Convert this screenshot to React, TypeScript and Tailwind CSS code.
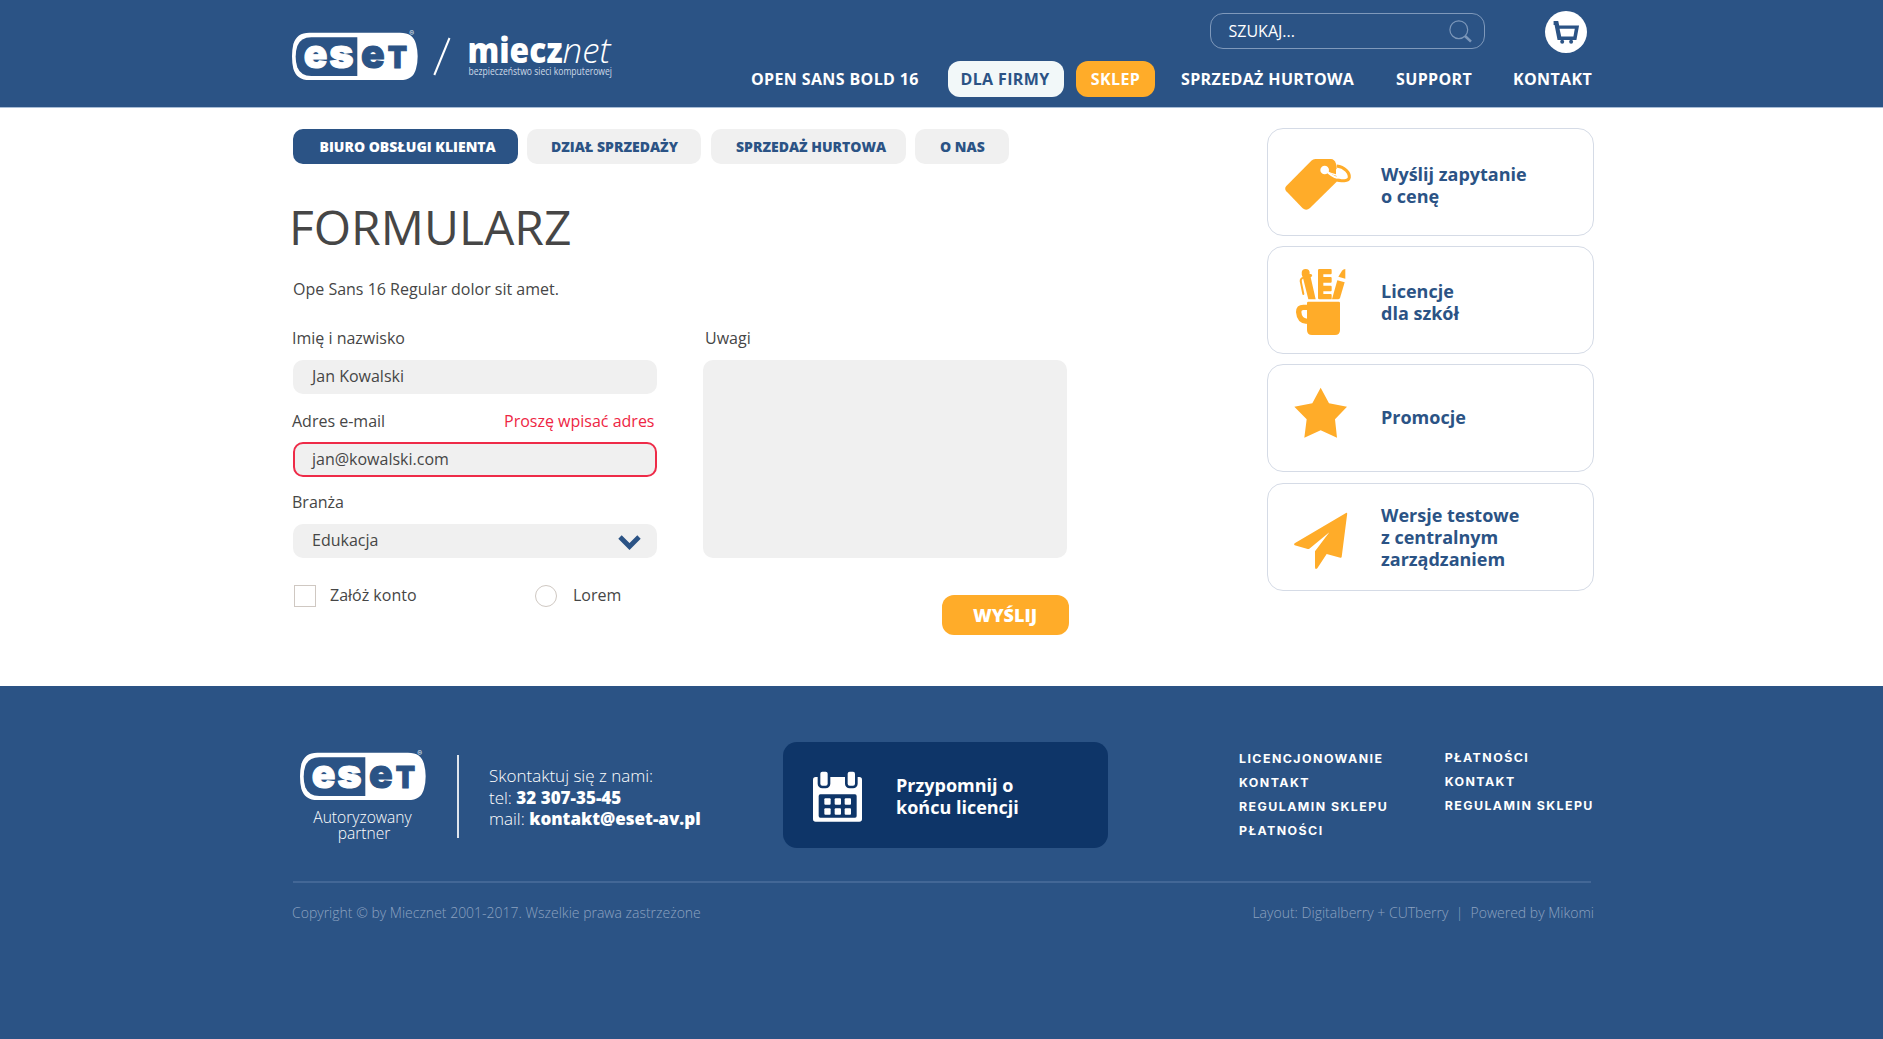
import React from "react";

function EsetLogo() {
  return (
    <svg className="block h-[51px] w-[128px] shrink-0" viewBox="36 27 384 153">
      <path
        d="M88 38H360Q400 38 408 72Q413 90 413 109Q413 130 408 146Q400 180 360 180H88Q50 180 40 146Q36 130 36 109Q36 90 40 72Q50 38 88 38Z"
        fill="#fff"
      />
      <path
        d="M232 52H94Q62 52 52 78Q47 92 47 110Q47 128 52 142Q62 168 94 168H232Z"
        fill="#2b5385"
      />
      <g fontFamily="Inter" fontWeight="900" strokeWidth="3">
        <g fill="#fff" stroke="#fff">
          <text x="71" y="143" fontSize="120" textLength="71" lengthAdjust="spacingAndGlyphs">e</text>
          <text x="148" y="143" fontSize="120" textLength="73" lengthAdjust="spacingAndGlyphs">s</text>
        </g>
        <g fill="#2b5385" stroke="#2b5385">
          <text x="243" y="143" fontSize="120" textLength="71" lengthAdjust="spacingAndGlyphs">e</text>
          <text x="323" y="143" fontSize="91" textLength="58" lengthAdjust="spacingAndGlyphs">T</text>
        </g>
      </g>
      <text x="388" y="48" fontSize="22" fontFamily="Inter" fontWeight="700" fill="#dbe4ee">®</text>
    </svg>
  );
}

function MiecznetLogo() {
  return (
    <svg className="block h-[51px] w-[190px] shrink-0" viewBox="430 29 190 51">
      <path d="M434.3 75L449.5 38" stroke="#fff" strokeWidth="2" />
      <g fontFamily="Open Sans" fill="#fff">
        <text x="467.5" y="63.2" fontSize="35" fontWeight="800" textLength="95" lengthAdjust="spacingAndGlyphs">miecz</text>
        <text x="562.5" y="63.2" fontSize="35" fontWeight="300" fontStyle="italic" textLength="48" lengthAdjust="spacingAndGlyphs">net</text>
        <text x="468.5" y="74.6" fontSize="10.5" fontWeight="400" fill="#cdd9e7" textLength="143.5" lengthAdjust="spacingAndGlyphs">
          bezpieczeństwo sieci komputerowej
        </text>
      </g>
    </svg>
  );
}

function Header() {
  return (
    <header className="flex h-[108px] border-b border-[#a9bdd6] bg-[#2b5385] pl-[292px] text-white">
      <div className="mt-[29px] flex w-[459px] gap-[10px]">
        <EsetLogo />
        <MiecznetLogo />
      </div>
      <div className="w-[844px]">
        <div className="flex h-[61px]">
          <div className="mt-[13px] ml-[459px] flex h-9 w-[275px] items-center justify-between rounded-[13px] border border-[#7f99bb] pr-3 pl-[17.5px]">
            <span>SZUKAJ...</span>
            <svg className="size-[23px]" viewBox="0 0 23 23" fill="none" stroke="#7c97ba">
              <circle cx="9.8" cy="9.7" r="8.9" strokeWidth="1.2" />
              <path d="M16 16L22 21.6" strokeWidth="2.6" />
            </svg>
          </div>
          <div className="mt-[11px] ml-[60px] size-[42px] rounded-full bg-white">
            <svg className="size-full" viewBox="1124 33 127 127">
              <path d="M1150 63H1164L1167 77H1227L1219 121H1162L1153 75H1150Z" fill="#2b5385" />
              <path d="M1168 87H1214L1210 110H1173Z" fill="#fff" />
              <circle cx="1176" cy="126" r="6" fill="#2b5385" />
              <circle cx="1203" cy="126" r="6" fill="#2b5385" />
            </svg>
          </div>
        </div>
        <nav className="flex h-9 items-center font-bold tracking-[0.37px] whitespace-nowrap">
          <a className="w-[197px]">OPEN SANS BOLD 16</a>
          <a className="flex h-9 w-[116px] items-center justify-center rounded-xl bg-[#f2f8f9] pr-[2px] text-[#2b5385]">DLA FIRMY</a>
          <a className="ml-3 flex h-9 w-[79px] items-center justify-center rounded-xl bg-[#ffac29]">SKLEP</a>
          <a className="ml-[26px] w-[215px]">SPRZEDAŻ HURTOWA</a>
          <a className="w-[117px]">SUPPORT</a>
          <a>KONTAKT</a>
        </nav>
      </div>
    </header>
  );
}

function Tabs() {
  return (
    <div className="ml-px flex h-[35px] text-sm leading-[35px] font-extrabold whitespace-nowrap text-[#2b5385]">
      <a className="w-[225px] rounded-[10px] bg-[#2b5385] pl-[26.5px] text-white">BIURO OBSŁUGI KLIENTA</a>
      <a className="ml-[9px] w-[174px] rounded-[10px] bg-[#f0f0f0] pl-6">DZIAŁ SPRZEDAŻY</a>
      <a className="ml-[10px] w-[195px] rounded-[10px] bg-[#f0f0f0] pl-[25px]">SPRZEDAŻ HURTOWA</a>
      <a className="ml-[9px] w-[94px] rounded-[10px] bg-[#f0f0f0] pl-[25px]">O NAS</a>
    </div>
  );
}

function ContactForm() {
  return (
    <div className="flex text-[#464646]">
      <div className="w-[365px]">
        <div className="h-[34px] leading-6">Imię i nazwisko</div>
        <div className="ml-px h-[34px] rounded-[10px] bg-[#f0f0f0] pl-[19px] leading-8">Jan Kowalski</div>
        <div className="mt-[15px] flex h-[33px] justify-between pr-[2.5px] leading-6">
          <span>Adres e-mail</span>
          <span className="text-[#ee2644]">Proszę wpisać adres</span>
        </div>
        <div className="ml-px h-[35px] rounded-[10px] border-2 border-[#ee2b48] bg-[#f0f0f0] pl-[17px] leading-[30px]">
          jan@kowalski.com
        </div>
        <div className="mt-[13px] h-[34px] leading-6">Branża</div>
        <div className="ml-px flex h-[34px] justify-between rounded-[10px] bg-[#f0f0f0] pr-4 pl-[19px] leading-8">
          <span>Edukacja</span>
          <svg className="mt-[11px] h-[15px] w-[23px]" viewBox="0 0 23 15">
            <path d="M2 2L11.5 11.5L21 2" fill="none" stroke="#2b5385" strokeWidth="4.8" />
          </svg>
        </div>
        <div className="mt-[27px] flex h-[22px] items-center leading-[22px]">
          <span className="ml-[2px] size-[22px] border border-[#cfc8c2]" />
          <span className="-mt-[2px] ml-[14px] w-[205px]">Załóż konto</span>
          <span className="size-[22px] rounded-full border border-[#cfc8c2]" />
          <span className="-mt-[2px] ml-4">Lorem</span>
        </div>
      </div>
      <div className="ml-[46px] w-[365.5px]">
        <div className="h-[34px] pl-[2px] leading-6">Uwagi</div>
        <div className="h-[198px] w-[364px] rounded-[10px] bg-[#f0f0f0]" />
        <button className="mt-[37px] ml-auto block h-10 w-[127px] rounded-xl bg-[#ffac29] text-lg leading-10 font-extrabold text-white">
          WYŚLIJ
        </button>
      </div>
    </div>
  );
}

function TagIcon() {
  return (
    <svg className="h-[106px] w-[113px] shrink-0" viewBox="54 27 339 318">
      <path d="M260 138C284 141 300 158 298 172C296 186 276 184 250 178" fill="none" stroke="#ffac29" strokeWidth="9" />
      <path d="M196 117H243Q253 117 258 131L260 146V185L180 264Q169 274 158 265L109 214Q102 206 109 198L184 122Q189 117 196 117Z" fill="#ffac29" />
      <path d="M258 147C276 150 292 160 292 168C288 176 262 172 226 153L258 163Z" fill="#fff" />
      <path d="M226 150C240 164 255 172 262 173" fill="none" stroke="#fff" strokeWidth="6" />
      <circle cx="224" cy="150" r="13" fill="#fff" />
    </svg>
  );
}

function MugIcon() {
  return (
    <svg className="h-[106px] w-[113px] shrink-0" viewBox="54 381 339 318">
      <g fill="#ffac29">
        <path d="M175 545H266Q270 545 270 549V630Q270 645 255 645H186Q171 645 171 630V549Q171 545 175 545Z" />
        <path d="M171 562H160Q146 562 146 576Q148 603 171 604" fill="none" stroke="#ffac29" strokeWidth="16" />
        <circle cx="167" cy="459" r="12" />
        <path d="M155 463L184 462L187 468L182 472L197 538H175L160 478Z" />
        <path d="M157 474Q150 478 153 488L160 522" fill="none" stroke="#ffac29" strokeWidth="6" strokeLinecap="round" />
        <path d="M208 447H242Q245 447 245 450V460Q245 463 242 463H220V471H242Q245 471 245 474V485Q245 488 242 488H220V497H242Q245 497 245 500V511Q245 514 242 514H220V522H242Q245 522 245 525V538H208Q204 538 204 534V451Q204 447 208 447Z" />
        <path d="M286 447V476L265 470L276 452Q280 447 286 447Z" />
        <path d="M262 481L284 487L270 534Q268 538 264 538H246Z" />
      </g>
    </svg>
  );
}

function StarIcon() {
  return (
    <svg className="h-[106px] w-[113px] shrink-0" viewBox="54 30 339 318">
      <path d="M212 98L237 145L291 155L255 193L261 248L212 226L163 248L170 193L133 155L187 145Z" fill="#ffac29" />
    </svg>
  );
}

function PlaneIcon() {
  return (
    <svg className="h-[106px] w-[113px] shrink-0" viewBox="54 387 339 318">
      <path d="M288 474Q292 472 291.500 477L275 606Q274 609 271 608L230 597L202 640Q195 645 195 636V589L238 532L178 581Q176 583 173 582L134 571Q130 568 134 565Z" fill="#ffac29" />
    </svg>
  );
}

function Card({ icon, className, children }: { icon: React.ReactNode; className: string; children: React.ReactNode }) {
  return (
    <a className="flex h-[108px] w-[327px] rounded-2xl border border-[#d5dbe6] text-lg leading-[22px] font-bold text-[#2b5385]">
      {icon}
      <span className={className}>{children}</span>
    </a>
  );
}

function Sidebar() {
  return (
    <aside className="mt-5 flex w-[327px] flex-col gap-[10px]">
      <Card icon={<TagIcon />} className="pt-[34px]">Wyślij zapytanie<br />o cenę</Card>
      <Card icon={<MugIcon />} className="pt-[33px]">Licencje<br />dla szkół</Card>
      <Card icon={<StarIcon />} className="pt-[41px]">Promocje</Card>
      <div className="mt-px">
        <Card icon={<PlaneIcon />} className="pt-[20px]">Wersje testowe<br />z centralnym<br />zarządzaniem</Card>
      </div>
    </aside>
  );
}

function CalendarIcon() {
  return (
    <svg className="mt-[29px] ml-[30px] h-[51px] w-[49px]" viewBox="129 124 147 153">
      <path d="M137 142H268Q276 142 276 150V268Q276 276 268 276H137Q129 276 129 268V150Q129 142 137 142Z" fill="#fff" />
      <g stroke="#0e3568" strokeWidth="16" fill="#fff" paintOrder="stroke">
        <rect x="151" y="126" width="22" height="42" rx="6" />
        <rect x="233" y="126" width="22" height="42" rx="6" />
      </g>
      <rect x="146" y="194" width="114" height="70" rx="5" fill="#0e3568" />
      <g fill="#fff">
        {[163, 194, 224].map((x) => (
          <g key={x}>
            <rect x={x} y="206" width="19" height="19" rx="3" />
            <rect x={x} y="236" width="19" height="19" rx="3" />
          </g>
        ))}
      </g>
    </svg>
  );
}

function Footer() {
  return (
    <footer className="h-[353px] bg-[#2b5385] pl-[292px] text-white">
      <div className="flex h-[196px] w-[1302px]">
        <div className="mt-[63px] ml-2 w-[128px] text-center text-[15.6px] leading-4 font-light">
          <EsetLogo />
          <div className="mt-[9px] pr-[3px]">Autoryzowany</div>
          <div>partner</div>
        </div>
        <div className="mt-[69px] ml-[29px] h-[83px] w-[2px] bg-white/85" />
        <div className="mt-[79px] ml-[30px] w-[294px] text-[17px] leading-[21.5px] font-light">
          <div>Skontaktuj się z nami:</div>
          <div>tel: <b className="font-extrabold">32 307-35-45</b></div>
          <div>mail: <b className="font-extrabold">kontakt@eset-av.pl</b></div>
        </div>
        <a className="mt-[56px] flex h-[106px] w-[325px] rounded-[14px] bg-[#0e3568] text-lg leading-[22px] font-bold">
          <CalendarIcon />
          <span className="mt-8 ml-[34px]">Przypomnij o<br />końcu licencji</span>
        </a>
        <div className="mt-[61px] ml-[130.5px] flex w-[340px] origin-left scale-x-106 font-['Inter'] text-[11.7px] leading-6 font-bold tracking-[1.35px] whitespace-nowrap">
          <div className="w-[194px]">
            <div>LICENCJONOWANIE</div>
            <div>KONTAKT</div>
            <div>REGULAMIN SKLEPU</div>
            <div>PŁATNOŚCI</div>
          </div>
          <div className="-mt-px">
            <div>PŁATNOŚCI</div>
            <div>KONTAKT</div>
            <div>REGULAMIN SKLEPU</div>
          </div>
        </div>
      </div>
      <div className="ml-px h-[2px] w-[1298px] -translate-y-px bg-[#436796]" />
      <div className="mt-[19px] flex w-[1302px] justify-between text-sm leading-5 font-light text-[#8ba2c0]">
        <span>Copyright © by Miecznet 2001-2017. Wszelkie prawa zastrzeżone</span>
        <span className="whitespace-pre">Layout: Digitalberry + CUTberry  |  Powered by Mikomi</span>
      </div>
    </footer>
  );
}

export default function App() {
  return (
    <div className="h-[1039px] w-[1883px] overflow-hidden bg-white font-['Open_Sans',sans-serif] text-base">
      <Header />
      <main className="flex h-[578px] pl-[292px]">
        <div className="mt-[21px] w-[975px]">
          <Tabs />
          <h1 className="mt-[33px] -ml-[3px] h-[60px] text-5xl leading-[60px] text-[#464646]">FORMULARZ</h1>
          <p className="mt-5 mb-[25px] ml-px leading-6 text-[#464646]">Ope Sans 16 Regular dolor sit amet.</p>
          <ContactForm />
        </div>
        <Sidebar />
      </main>
      <Footer />
    </div>
  );
}
